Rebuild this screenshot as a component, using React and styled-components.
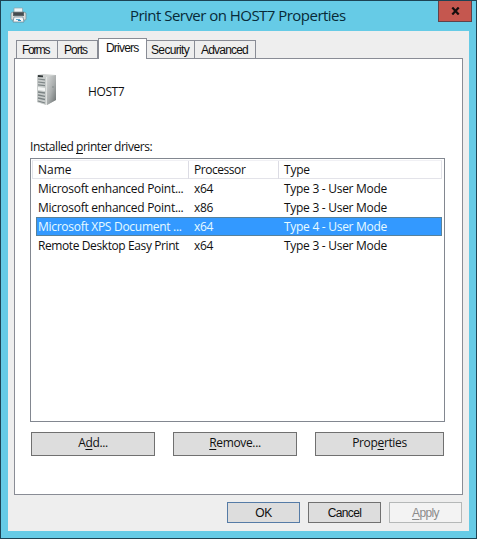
import React from "react";
import styled, { createGlobalStyle, css } from "styled-components";

const GlobalStyle = createGlobalStyle`
  * { box-sizing: border-box; }
  html, body { margin: 0; padding: 0; overflow: hidden; }
  body { font-family: "Open Sans", "Noto Sans", sans-serif; font-size: 12px; color: #101010; }
`;

const Window = styled.div`
  width: 477px;
  height: 539px;
  display: flex;
  flex-direction: column;
  padding: 0 7px 7px;
  background: #66cbe6;
  border: 1px solid #1d4354;
`;

const TitleBar = styled.header`
  height: 30px;
  flex: none;
  display: grid;
  grid-template-columns: 38px 1fr 38px;
  margin-right: -5px;
`;

const TitleIcon = styled.div`
  padding: 6px 0 0 2px;
  line-height: 0;
`;

const Title = styled.h1`
  margin: 0;
  padding-left: 84px;
  font-size: 15px;
  font-weight: 400;
  line-height: 29px;
  letter-spacing: -0.53px;
  white-space: nowrap;
  color: #082a38;
`;

const CloseButton = styled.button`
  width: 34px;
  height: 21px;
  padding: 0;
  margin-left: 2px;
  display: flex;
  align-items: center;
  justify-content: center;
  background: #c5574f;
  border: 1px solid #60424a;
  border-top: 0;
`;

const Body = styled.main`
  flex: 1;
  display: flex;
  flex-direction: column;
  background: #eeeeee;
  padding: 6px 6px 0;
`;

const Tabs = styled.nav`
  display: flex;
  align-items: flex-end;
  height: 21px;
  padding-left: 2px;
`;

const Tab = styled.div`
  width: ${(p) => p.$width}px;
  height: 18px;
  padding-left: ${(p) => p.$pad}px;
  font-family: "Liberation Sans", Arial, sans-serif;
  font-size: 12px;
  letter-spacing: ${(p) => p.$spacing};
  line-height: 18px;
  white-space: nowrap;
  background: #eeeeee;
  border: 1px solid #898c95;
  border-left-width: ${(p) => (p.$first || p.$active ? 1 : 0)}px;
  border-bottom: 0;
  ${(p) =>
    p.$active &&
    css`
      height: 21px;
      margin-bottom: -1px;
      line-height: 19px;
      background: #ffffff;
      position: relative;
      z-index: 1;
    `}
`;

const Panel = styled.section`
  width: 449px;
  height: 437px;
  padding: 0 0 0 15px;
  background: #ffffff;
  border: 1px solid #898c95;
`;

const Server = styled.div`
  display: flex;
  align-items: flex-start;
  height: 61px;
  padding: 15px 0 0 7px;
  gap: 31px;
  letter-spacing: -0.4px;
`;

const ServerName = styled.span`
  padding-top: 9px;
`;

const Label = styled.div`
  height: 37px;
  padding-top: 17px;
  line-height: 20px;
  letter-spacing: -0.46px;
  white-space: nowrap;
`;

const List = styled.div`
  width: 415px;
  height: 264px;
  margin-top: 1px;
  padding: 1px;
  background: #fff;
  border: 1px solid #828790;
`;

const HeaderRow = styled.div`
  display: grid;
  grid-template-columns: 156px 90px 163px;
  height: 19px;
  width: 410px;
  border: 1px solid #e3e3e9;
  border-top-color: #f0f0f4;
`;

const HeaderCell = styled.div`
  padding-left: ${(p) => p.$pad}px;
  line-height: 18px;
  letter-spacing: ${(p) => p.$spacing || 0};
  border-right: 1px solid #dcdce4;

  &:last-child {
    border-right: 0;
  }
`;

const Row = styled.div`
  display: grid;
  grid-template-columns: 152px 90px 1fr;
  width: 406px;
  height: 19px;
  margin-left: 4px;
  line-height: 17px;
  border: 1px solid transparent;
  white-space: nowrap;
  ${(p) =>
    p.$selected &&
    css`
      color: #e8fbff;
      background: #3399ff;
      border-color: #57829c;
    `}
`;

const Cell = styled.span`
  padding-left: ${(p) => p.$pad}px;
  letter-spacing: ${(p) => p.$spacing || "-0.28px"};
`;

const Actions = styled.div`
  display: flex;
  gap: 18px;
  padding: 10px 0 0 1px;
`;

const Button = styled.button`
  width: ${(p) => p.$width}px;
  height: ${(p) => p.$height}px;
  padding: 0 0 2px;
  font: inherit;
  line-height: 18px;
  letter-spacing: -0.35px;
  color: #101010;
  background: #dddddd;
  border: 1px solid #707070;
  border-radius: 0;
`;

const DialogButton = styled(Button).attrs({ $width: 73, $height: 21 })`
  font-family: "Liberation Sans", Arial, sans-serif;
  letter-spacing: ${(p) => p.$spacing || "-0.65px"};
  padding: 0;
  ${(p) => p.$primary && css`border-color: #557ba6;`}
  ${(p) =>
    p.disabled &&
    css`
      color: #8b8b8b;
      background: #f3f3f3;
      border-color: #b5b8b8;
    `}
`;

const Footer = styled.footer`
  display: flex;
  justify-content: flex-end;
  gap: 8px;
  padding: 7px 1px 0 0;
`;

const Key = styled.span`
  text-decoration: underline;
  text-underline-offset: 2px;
  text-decoration-skip-ink: none;
`;

const PrinterIcon = () => (
  <svg width="17" height="17" viewBox="0 0 17 17">
    <path d="M4 1h8.500v5H4z" fill="#eef4f5" stroke="#8ba3ad" strokeWidth=".7" />
    <path d="M1 6l2-1h11l2 1v6q0 1-1 1H2q-1 0-1-1z" fill="#d9dcda" stroke="#76868b" strokeWidth=".7" />
    <path d="M3 5h11v4H3z" fill="#5b6468" />
    <path d="M4 6h9v2H4z" fill="#444b4e" />
    <path d="M4 10h9l1 5H3z" fill="#f4f8fa" stroke="#657d88" strokeWidth=".7" />
    <path d="M6 12h4v1H6z" fill="#5caacd" />
    <path d="M8 13h3v1H8z" fill="#2788ba" />
  </svg>
);

const ServerIcon = () => (
  <svg width="20" height="32" viewBox="0 0 20 32">
    <defs>
      <linearGradient id="side" x1="0" y1="0" x2="1" y2="1">
        <stop offset="0" stopColor="#dadcdc" />
        <stop offset=".55" stopColor="#a9adad" />
        <stop offset="1" stopColor="#686e6e" />
      </linearGradient>
    </defs>
    <path d="M0 1L6 0l13 1v25l-9 5-10-3z" fill="#cfd2d1" />
    <path d="M9 3l10-2v25l-9 5z" fill="url(#side)" />
    <path d="M0 2l9 1v28l-9-3z" fill="#c9cdcc" />
    <path d="M1 2l5 .4" stroke="#303637" strokeWidth="1.800" />
    <path d="M1 5l7 .8M1 8l7 .8M1 10.800l7 .8" stroke="#7f8788" strokeWidth="1.200" />
    <path d="M1 13l7 1v3l-7-1z" fill="#f3f5f4" />
    <path d="M1 18l7 1M1 21l7 1.300M1 24l7 1.500M1 27l7 2" stroke="#7b8384" strokeWidth="1.300" />
    <path d="M9.500 3v28" stroke="#e9ebea" strokeWidth=".7" />
    <circle cx="16" cy="13" r="1" fill="#8f9696" />
  </svg>
);

const CloseIcon = () => (
  <svg width="9" height="8" viewBox="0 0 9 8">
    <path d="M1.300 .5l6.400 7M7.700 .5l-6.400 7" stroke="#160e0e" strokeWidth="2.200" />
  </svg>
);

const drivers = [
  { name: "Microsoft enhanced Point...", cpu: "x64", type: "Type 3 - User Mode" },
  { name: "Microsoft enhanced Point...", cpu: "x86", type: "Type 3 - User Mode" },
  { name: "Microsoft XPS Document ...", cpu: "x64", type: "Type 4 - User Mode", selected: true },
  { name: "Remote Desktop Easy Print", cpu: "x64", type: "Type 3 - User Mode", spacing: "-0.4px" },
];

export default function App() {
  return (
    <>
      <GlobalStyle />
      <Window>
        <TitleBar>
          <TitleIcon><PrinterIcon /></TitleIcon>
          <Title>Print Server on HOST7 Properties</Title>
          <CloseButton aria-label="Close"><CloseIcon /></CloseButton>
        </TitleBar>
        <Body>
          <Tabs>
            <Tab $width={42} $pad={5} $spacing="-1.4px" $first>Forms</Tab>
            <Tab $width={40} $pad={6} $spacing="-1px">Ports</Tab>
            <Tab $width={49} $pad={7} $spacing="-0.8px" $active>Drivers</Tab>
            <Tab $width={48} $pad={4} $spacing="-0.65px">Security</Tab>
            <Tab $width={61} $pad={6} $spacing="-0.8px">Advanced</Tab>
          </Tabs>
          <Panel>
            <Server><ServerIcon /><ServerName>HOST7</ServerName></Server>
            <Label>Installed <Key>p</Key>rinter drivers:</Label>
            <List>
              <HeaderRow>
                <HeaderCell $pad={5}>Name</HeaderCell>
                <HeaderCell $pad={5} $spacing="-0.45px">Processor</HeaderCell>
                <HeaderCell $pad={5} $spacing="-0.2px">Type</HeaderCell>
              </HeaderRow>
              {drivers.map((d, i) => (
                <Row key={i} $selected={d.selected}>
                  <Cell $pad={1} $spacing={d.spacing}>{d.name}</Cell>
                  <Cell $pad={5}>{d.cpu}</Cell>
                  <Cell $pad={5}>{d.type}</Cell>
                </Row>
              ))}
            </List>
            <Actions>
              <Button $width={124} $height={24}>A<Key>d</Key>d...</Button>
              <Button $width={124} $height={24}><Key>R</Key>emove...</Button>
              <Button $width={129} $height={24}>Prop<Key>e</Key>rties</Button>
            </Actions>
          </Panel>
          <Footer>
            <DialogButton $primary $spacing="-0.4px">OK</DialogButton>
            <DialogButton>Cancel</DialogButton>
            <DialogButton disabled><Key>A</Key>pply</DialogButton>
          </Footer>
        </Body>
      </Window>
    </>
  );
}
